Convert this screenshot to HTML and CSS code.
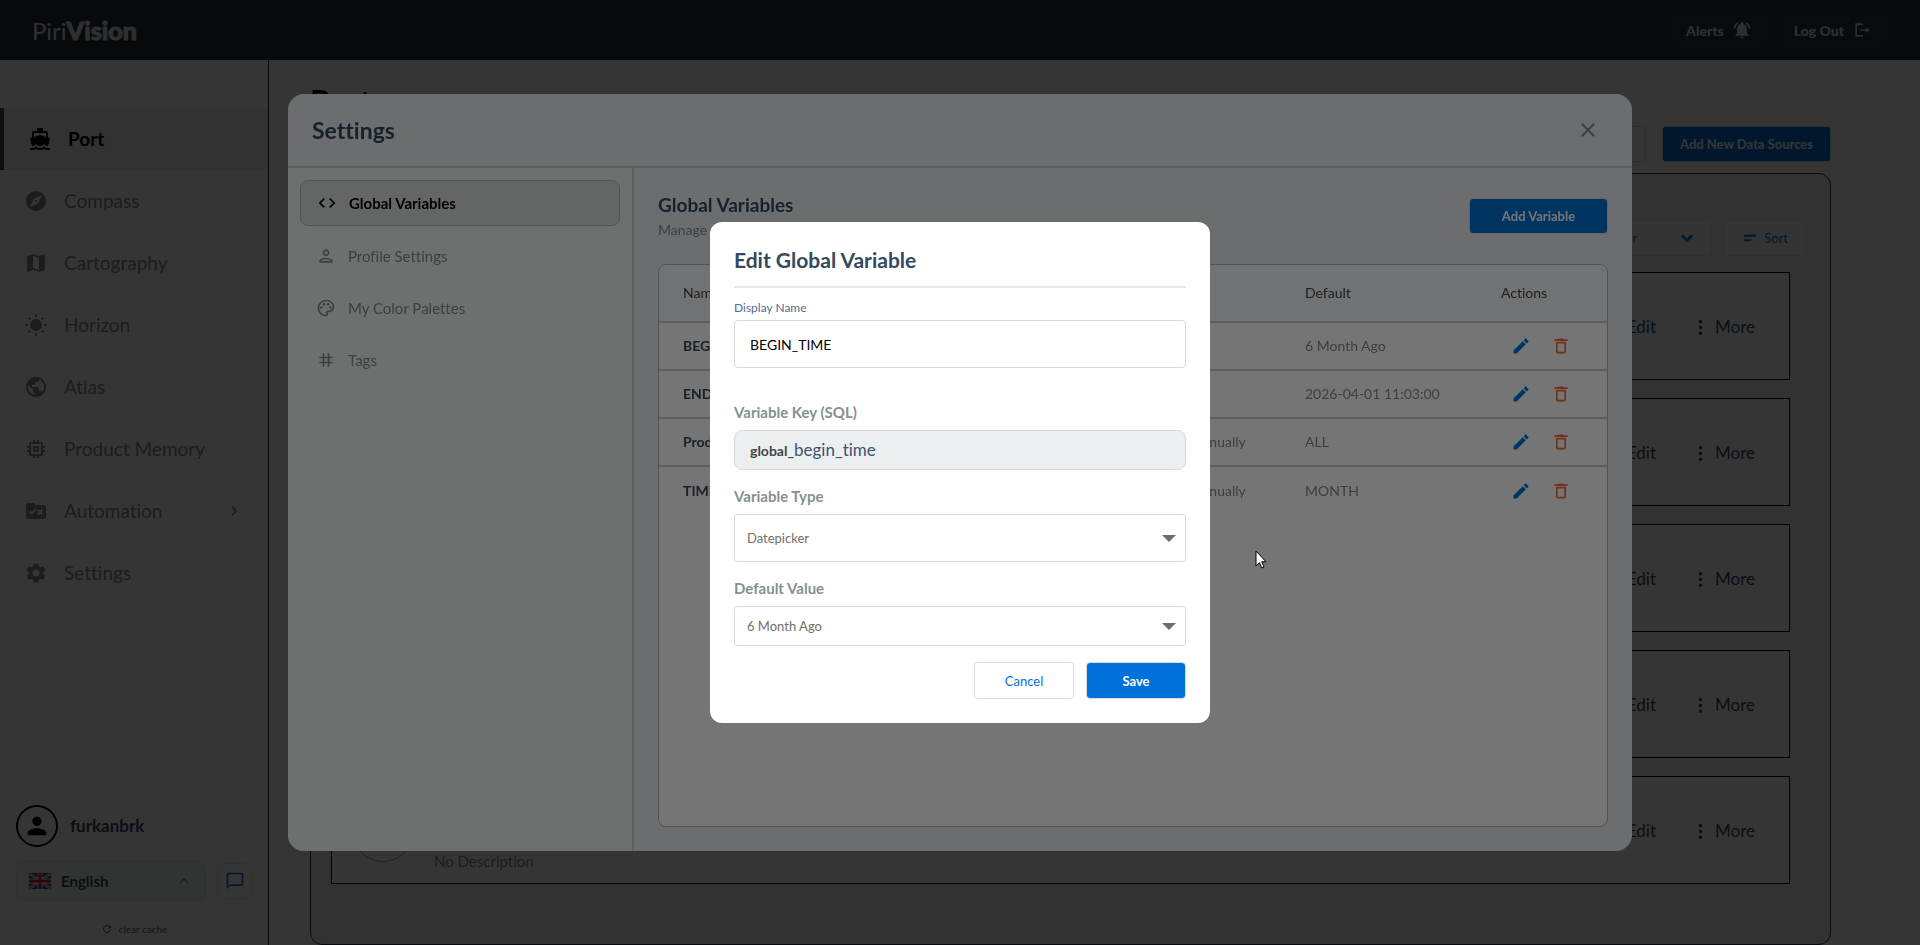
FILE: index.html
```html
<!DOCTYPE html>
<html lang="en">
<head>
    <meta charset="UTF-8">
    <meta name="viewport" content="width=device-width, initial-scale=1.0">
    <title>PiriVision</title>
    <link rel="stylesheet" href="styles.css">
</head>
<body>
    <!-- icon set -->
    <svg class="sprite" aria-hidden="true">
        <symbol id="i-boat" viewBox="0 0 24 24"><path d="M20 21c-1.39 0-2.78-.47-4-1.32-2.44 1.71-5.56 1.71-8 0C6.78 20.53 5.39 21 4 21H2v2h2c1.38 0 2.74-.35 4-.99 2.52 1.29 5.48 1.29 8 0 1.26.65 2.62.99 4 .99h2v-2h-2zM3.95 19H4c1.6 0 3.02-.88 4-2 .98 1.12 2.4 2 4 2s3.02-.88 4-2c.98 1.12 2.4 2 4 2h.05l1.89-6.68c.08-.26.06-.54-.06-.78s-.34-.42-.6-.5L20 10.62V6c0-1.1-.9-2-2-2h-3V1H9v3H6c-1.1 0-2 .9-2 2v4.62l-1.29.42c-.26.08-.48.26-.6.5s-.15.52-.06.78L3.95 19zM6 6h12v3.97L12 8 6 9.97V6z"/></symbol>
        <symbol id="i-compass" viewBox="0 0 24 24"><path d="M12 10.9c-.61 0-1.1.49-1.1 1.1s.49 1.1 1.1 1.1c.61 0 1.1-.49 1.1-1.1s-.49-1.1-1.1-1.1zM12 2C6.48 2 2 6.48 2 12s4.48 10 10 10 10-4.48 10-10S17.52 2 12 2zm2.19 12.19L6 18l3.81-8.19L18 6l-3.81 8.19z"/></symbol>
        <symbol id="i-map" viewBox="0 0 24 24"><path d="M20.5 3l-.16.03L15 5.1 9 3 3.36 4.9c-.21.07-.36.25-.36.48V20.5c0 .28.22.5.5.5l.16-.03L9 18.9l6 2.1 5.64-1.9c.21-.07.36-.25.36-.48V3.5c0-.28-.22-.5-.5-.5zM15 19l-6-2.11V5l6 2.11V19z"/></symbol>
        <symbol id="i-sun" viewBox="0 0 24 24"><circle cx="12" cy="12" r="6"/><path d="M11 1h2v3h-2zM11 20h2v3h-2zM1 11h3v2H1zM20 11h3v2h-3zM3.9 5.3l1.4-1.4 1.8 1.8-1.4 1.4zM16.9 18.3l1.4-1.4 1.8 1.8-1.4 1.4zM16.9 5.7l1.8-1.8 1.4 1.4-1.8 1.8zM3.9 18.7l1.8-1.8 1.4 1.4-1.8 1.8z"/></symbol>
        <symbol id="i-globe" viewBox="0 0 24 24"><path d="M12 2C6.48 2 2 6.48 2 12s4.48 10 10 10 10-4.48 10-10S17.52 2 12 2zm-1 17.93c-3.95-.49-7-3.85-7-7.93 0-.62.08-1.21.21-1.79L9 15v1c0 1.1.9 2 2 2v1.93zm6.9-2.54c-.26-.81-1-1.39-1.9-1.39h-1v-3c0-.55-.45-1-1-1H8v-2h2c.55 0 1-.45 1-1V7h2c1.1 0 2-.9 2-2v-.41c2.93 1.19 5 4.06 5 7.41 0 2.08-.8 3.97-2.1 5.39z"/></symbol>
        <symbol id="i-memory" viewBox="0 0 24 24"><path d="M15 9H9v6h6V9zm-2 4h-2v-2h2v2zm8-2V9h-2V7c0-1.1-.9-2-2-2h-2V3h-2v2h-2V3H9v2H7c-1.1 0-2 .9-2 2v2H3v2h2v2H3v2h2v2c0 1.1.9 2 2 2h2v2h2v-2h2v2h2v-2h2c1.1 0 2-.9 2-2v-2h2v-2h-2v-2h2zm-4 6H7V7h10v10z"/></symbol>
        <symbol id="i-rules" viewBox="0 0 24 24"><path d="M20 6h-8l-2-2H4c-1.1 0-2 .9-2 2v12c0 1.1.9 2 2 2h16c1.1 0 2-.9 2-2V8c0-1.1-.9-2-2-2zM7.83 16L5 13.17l1.41-1.41 1.41 1.41 3.54-3.54 1.41 1.41L7.83 16zm9.58-3L19 14.59 17.59 16 16 14.41 14.41 16 13 14.59 14.59 13 13 11.41 14.41 10 16 11.59 17.59 10 19 11.41 17.41 13z"/></symbol>
        <symbol id="i-gear" viewBox="0 0 24 24"><path d="M19.14 12.94c.04-.3.06-.61.06-.94 0-.32-.02-.64-.07-.94l2.03-1.58c.18-.14.23-.41.12-.61l-1.92-3.32c-.12-.22-.37-.29-.59-.22l-2.39.96c-.5-.38-1.03-.7-1.62-.94l-.36-2.54c-.04-.24-.24-.41-.48-.41h-3.84c-.24 0-.43.17-.47.41l-.36 2.54c-.59.24-1.13.57-1.62.94l-2.39-.96c-.22-.08-.47 0-.59.22L2.74 8.87c-.12.21-.08.47.12.61l2.03 1.58c-.05.3-.09.63-.09.94s.02.64.07.94l-2.03 1.58c-.18.14-.23.41-.12.61l1.92 3.32c.12.22.37.29.59.22l2.39-.96c.5.38 1.03.7 1.62.94l.36 2.54c.05.24.24.41.48.41h3.84c.24 0 .44-.17.47-.41l.36-2.54c.59-.24 1.13-.56 1.62-.94l2.39.96c.22.08.47 0 .59-.22l1.92-3.32c.12-.22.07-.47-.12-.61l-2.01-1.58zM12 15.6c-1.98 0-3.6-1.62-3.6-3.6s1.62-3.6 3.6-3.6 3.6 1.62 3.6 3.6-1.62 3.6-3.6 3.6z"/></symbol>
        <symbol id="i-right" viewBox="0 0 24 24"><path d="M8.59 16.59L13.17 12 8.59 7.41 10 6l6 6-6 6z"/></symbol>
        <symbol id="i-up" viewBox="0 0 24 24"><path d="M7.41 15.41L12 10.83l4.59 4.58L18 14l-6-6-6 6z"/></symbol>
        <symbol id="i-down" viewBox="0 0 24 24"><path d="M6 9l6 6 6-6" fill="none" stroke="currentColor" stroke-width="3"/></symbol>
        <symbol id="i-person" viewBox="0 0 24 24"><path d="M12 12c2.21 0 4-1.79 4-4s-1.79-4-4-4-4 1.79-4 4 1.79 4 4 4zm0 2c-2.67 0-8 1.34-8 4v2h16v-2c0-2.66-5.33-4-8-4z"/></symbol>
        <symbol id="i-person-line" viewBox="0 0 24 24"><path d="M12 6c1.1 0 2 .9 2 2s-.9 2-2 2-2-.9-2-2 .9-2 2-2m0 10c2.7 0 5.8 1.29 6 2H6c.23-.72 3.31-2 6-2m0-12C9.79 4 8 5.79 8 8s1.79 4 4 4 4-1.79 4-4-1.79-4-4-4zm0 10c-2.67 0-8 1.34-8 4v2h16v-2c0-2.66-5.33-4-8-4z"/></symbol>
        <symbol id="i-chat" viewBox="0 0 24 24"><path d="M20 2H4c-1.1 0-2 .9-2 2v18l4-4h14c1.1 0 2-.9 2-2V4c0-1.1-.9-2-2-2zm0 14H6l-2 2V4h16v12z"/></symbol>
        <symbol id="i-refresh" viewBox="0 0 24 24"><path d="M17.65 6.35C16.2 4.9 14.21 4 12 4c-4.42 0-7.99 3.58-7.99 8s3.57 8 7.99 8c3.73 0 6.84-2.55 7.73-6h-2.08c-.82 2.33-3.04 4-5.65 4-3.31 0-6-2.69-6-6s2.69-6 6-6c1.66 0 3.14.69 4.22 1.78L13 11h7V4l-2.35 2.35z"/></symbol>
        <symbol id="i-bell" viewBox="0 0 24 24"><path d="M7.58 4.08L6.15 2.65C3.75 4.48 2.17 7.3 2.03 10.5h2c.15-2.65 1.51-4.97 3.55-6.42zm12.39 6.42h2c-.15-3.2-1.73-6.02-4.12-7.85l-1.42 1.43c2.02 1.45 3.39 3.77 3.54 6.42zM18 11c0-3.07-1.64-5.64-4.5-6.32V4c0-.83-.67-1.5-1.5-1.5s-1.5.67-1.5 1.5v.68C7.63 5.36 6 7.92 6 11v5l-2 2v1h16v-1l-2-2v-5zm-6 11c.14 0 .27-.01.4-.04.65-.14 1.18-.58 1.44-1.18.1-.24.15-.5.15-.78h-4c.01 1.1.9 2 2.01 2z"/></symbol>
        <symbol id="i-logout" viewBox="0 0 24 24"><path d="M4 4h9v2H6v12h7v2H4zM17 8.5l4.2 3.5-4.2 3.5V13h-7v-2h7z"/></symbol>
        <symbol id="i-code" viewBox="0 0 24 24"><path d="M9.4 16.6L4.8 12l4.6-4.6L8 6l-6 6 6 6 1.4-1.4zm5.2 0l4.6-4.6-4.6-4.6L16 6l6 6-6 6-1.4-1.4z"/></symbol>
        <symbol id="i-palette" viewBox="0 0 24 24"><path d="M12 22C6.49 22 2 17.51 2 12S6.49 2 12 2s10 4.04 10 9c0 3.31-2.69 6-6 6h-1.77c-.28 0-.5.22-.5.5 0 .12.05.23.13.33.41.47.64 1.06.64 1.67 0 1.38-1.12 2.5-2.5 2.5zm0-18c-4.41 0-8 3.59-8 8s3.59 8 8 8c.28 0 .5-.22.5-.5 0-.16-.08-.28-.14-.35-.41-.46-.63-1.05-.63-1.65 0-1.38 1.12-2.5 2.5-2.5H16c2.21 0 4-1.79 4-4 0-3.86-3.59-7-8-7z"/><circle cx="6.5" cy="11.5" r="1.5"/><circle cx="9.5" cy="7.5" r="1.5"/><circle cx="14.5" cy="7.5" r="1.5"/><circle cx="17.5" cy="11.5" r="1.5"/></symbol>
        <symbol id="i-tag" viewBox="0 0 24 24"><path d="M20 10V8h-4V4h-2v4h-4V4H8v4H4v2h4v4H4v2h4v4h2v-4h4v4h2v-4h4v-2h-4v-4h4zm-6 4h-4v-4h4v4z"/></symbol>
        <symbol id="i-close" viewBox="0 0 24 24"><path d="M19 6.41L17.59 5 12 10.59 6.41 5 5 6.41 10.59 12 5 17.59 6.41 19 12 13.41 17.59 19 19 17.59 13.41 12z"/></symbol>
        <symbol id="i-pen" viewBox="0 0 24 24"><path d="M3 17.25V21h3.75L17.81 9.94l-3.75-3.75L3 17.25zM20.71 7.04c.39-.39.39-1.02 0-1.41l-2.34-2.34c-.39-.39-1.02-.39-1.41 0l-1.83 1.83 3.75 3.75 1.83-1.83z"/></symbol>
        <symbol id="i-trash" viewBox="0 0 24 24"><path d="M6 19c0 1.1.9 2 2 2h8c1.1 0 2-.9 2-2V7H6v12zM8 9h8v10H8V9zm7.5-5l-1-1h-5l-1 1H4v2h16V4z"/></symbol>
        <symbol id="i-sort" viewBox="0 0 24 24"><path d="M3 7h18v3H3zM3 14h11v3H3z"/></symbol>
        <symbol id="i-dots" viewBox="0 0 24 24"><circle cx="12" cy="4" r="2.5"/><circle cx="12" cy="12" r="2.5"/><circle cx="12" cy="20" r="2.5"/></symbol>
    </svg>

    <div class="app">
        <header class="topbar">
            <div class="logo">Piri<strong>Vision</strong></div>
            <div class="topbar-actions">
                <button type="button" class="top-btn">Alerts <svg class="icon"><use href="#i-bell"/></svg></button>
                <button type="button" class="top-btn">Log Out <svg class="icon"><use href="#i-logout"/></svg></button>
            </div>
        </header>

        <div class="body">
            <aside class="sidebar">
                <nav class="menu">
                    <a href="#" class="menu-item active"><svg class="icon"><use href="#i-boat"/></svg>Port</a>
                    <a href="#" class="menu-item"><svg class="icon"><use href="#i-compass"/></svg>Compass</a>
                    <a href="#" class="menu-item"><svg class="icon"><use href="#i-map"/></svg>Cartography</a>
                    <a href="#" class="menu-item"><svg class="icon"><use href="#i-sun"/></svg>Horizon</a>
                    <a href="#" class="menu-item"><svg class="icon"><use href="#i-globe"/></svg>Atlas</a>
                    <a href="#" class="menu-item"><svg class="icon"><use href="#i-memory"/></svg>Product Memory</a>
                    <a href="#" class="menu-item"><svg class="icon"><use href="#i-rules"/></svg>Automation<svg class="icon arrow"><use href="#i-right"/></svg></a>
                    <a href="#" class="menu-item"><svg class="icon"><use href="#i-gear"/></svg>Settings</a>
                </nav>
                <div class="sidebar-footer">
                    <div class="user">
                        <span class="avatar"><svg class="icon"><use href="#i-person"/></svg></span>
                        furkanbrk
                    </div>
                    <div class="lang-row">
                        <button type="button" class="lang-btn">
                            <svg class="flag" viewBox="0 0 22 16">
                                <rect width="22" height="16" fill="#1b3f94"/>
                                <path d="M0 0l22 16M22 0L0 16" stroke="#fff" stroke-width="3"/>
                                <path d="M0 0l22 16M22 0L0 16" stroke="#d0203a" stroke-width="1"/>
                                <path d="M11 0v16M0 8h22" stroke="#fff" stroke-width="5"/>
                                <path d="M11 0v16M0 8h22" stroke="#d0203a" stroke-width="3"/>
                            </svg>
                            English
                            <svg class="icon caret"><use href="#i-up"/></svg>
                        </button>
                        <button type="button" class="chat-btn" aria-label="Feedback"><svg class="icon"><use href="#i-chat"/></svg></button>
                    </div>
                    <button type="button" class="cache-btn"><svg class="icon"><use href="#i-refresh"/></svg>clear cache</button>
                </div>
            </aside>

            <main class="main">
                <h1>Port</h1>
                <div class="toolbar">
                    <input type="text" class="search" aria-label="Search">
                    <button type="button" class="btn btn-primary add-source">Add New Data Sources</button>
                </div>
                <section class="panel">
                    <div class="filters">
                        <button type="button" class="filter-btn">Filter<svg class="icon"><use href="#i-down"/></svg></button>
                        <button type="button" class="sort-btn"><svg class="icon"><use href="#i-sort"/></svg>Sort</button>
                    </div>
                    <div class="cards" id="cards"></div>
                </section>
            </main>
        </div>
    </div>

    <div class="overlay">
        <div class="settings" role="dialog" aria-labelledby="settingsTitle">
            <div class="settings-header">
                <h2 id="settingsTitle">Settings</h2>
                <button type="button" class="close-btn" aria-label="Close"><svg class="icon"><use href="#i-close"/></svg></button>
            </div>
            <div class="settings-body">
                <nav class="settings-nav">
                    <a href="#" class="nav-item selected"><svg class="icon"><use href="#i-code"/></svg>Global Variables</a>
                    <a href="#" class="nav-item"><svg class="icon"><use href="#i-person-line"/></svg>Profile Settings</a>
                    <a href="#" class="nav-item"><svg class="icon"><use href="#i-palette"/></svg>My Color Palettes</a>
                    <a href="#" class="nav-item"><svg class="icon"><use href="#i-tag"/></svg>Tags</a>
                </nav>
                <section class="settings-main">
                    <div class="section-head">
                        <div>
                            <h3>Global Variables</h3>
                            <p>Manage all variables</p>
                        </div>
                        <button type="button" class="btn btn-primary add-variable">Add Variable</button>
                    </div>
                    <div class="table-box">
                        <table>
                            <thead>
                                <tr>
                                    <th>Name</th>
                                    <th class="col-type">Type</th>
                                    <th class="col-default">Default</th>
                                    <th class="col-actions">Actions</th>
                                </tr>
                            </thead>
                            <tbody id="variables"></tbody>
                        </table>
                    </div>
                </section>
            </div>
        </div>
    </div>

    <div class="overlay">
        <form class="edit" role="dialog" aria-labelledby="editTitle">
            <h2 id="editTitle">Edit Global Variable</h2>
            <label class="small-label" for="displayName">Display Name</label>
            <input type="text" class="field tall" id="displayName" value="BEGIN_TIME">
            <div class="key-label">Variable Key (SQL)</div>
            <div class="key-box"><b>global_</b>begin_time</div>
            <label for="varType">Variable Type</label>
            <select class="field tall" id="varType">
                <option>Datepicker</option>
            </select>
            <label for="defaultValue">Default Value</label>
            <select class="field" id="defaultValue">
                <option>6 Month Ago</option>
            </select>
            <div class="edit-actions">
                <button type="button" class="btn btn-outline">Cancel</button>
                <button type="button" class="btn btn-primary">Save</button>
            </div>
        </form>
    </div>

    <svg class="cursor" viewBox="0 0 12 19"><path d="M1 1v15l3.5-3.3 2.3 5.3 2.2-1-2.3-5.2H11z" fill="#fff" stroke="#000"/></svg>

    <script>
        const variables = [
            { name: 'BEGIN_TIME', type: '', value: '6 Month Ago' },
            { name: 'END_TIME', type: '', value: '2026-04-01 11:03:00' },
            { name: 'Product', type: 'Add Manually', value: 'ALL' },
            { name: 'TIME', type: 'Add Manually', value: 'MONTH' }
        ];

        document.getElementById('variables').innerHTML = variables.map(v => `
            <tr>
                <td class="var-name">${v.name}</td>
                <td>${v.type}</td>
                <td>${v.value}</td>
                <td class="actions">
                    <button type="button" class="edit-btn" aria-label="Edit"><svg class="icon"><use href="#i-pen"/></svg></button>
                    <button type="button" class="delete-btn" aria-label="Delete"><svg class="icon"><use href="#i-trash"/></svg></button>
                </td>
            </tr>
        `).join('');

        // data source cards
        let cards = '';
        for (let i = 0; i < 5; i++) {
            cards += `
                <article class="card">
                    <span class="card-logo"></span>
                    <p class="card-desc">No Description</p>
                    <a href="#" class="card-link">Edit</a>
                    <a href="#" class="card-link"><svg class="icon"><use href="#i-dots"/></svg>More</a>
                </article>
            `;
        }
        document.getElementById('cards').innerHTML = cards;
    </script>
</body>
</html>
```
FILE: styles.css
```css
* {
    margin: 0;
    padding: 0;
    box-sizing: border-box;
}

body {
    font-family: Lato, "Liberation Sans", sans-serif;
    font-size: 14px;
    line-height: 20px;
    font-variant-ligatures: none;
    background-color: #fff;
    color: #34495e;
    overflow: hidden;
}

a {
    color: inherit;
    text-decoration: none;
}

button,
input,
select {
    font-family: inherit;
    font-size: 14px;
}

button {
    cursor: pointer;
    border: none;
    background: none;
    color: inherit;
}

.sprite {
    display: none;
}

.icon {
    width: 20px;
    height: 20px;
    fill: currentColor;
    flex-shrink: 0;
}

.app {
    display: flex;
    flex-direction: column;
    height: 100vh;
}

/* top bar */
.topbar {
    display: flex;
    justify-content: space-between;
    align-items: center;
    height: 60px;
    padding: 0 32px;
    background-color: #213042;
    color: #e0e0e0;
}

.logo {
    font-size: 24px;
    line-height: 32px;
}

.logo strong {
    font-size: 25px;
    font-weight: 900;
    -webkit-text-stroke: 1px currentColor;
}

.topbar-actions {
    display: flex;
    gap: 10px;
}

.top-btn {
    display: flex;
    align-items: center;
    gap: 8px;
    height: 36px;
    padding: 0 16px;
    border-radius: 8px;
    background-color: rgba(255, 255, 255, 0.03);
    font-weight: 900;
}

/* sidebar */
.body {
    display: flex;
    flex: 1;
    min-height: 0;
}

.sidebar {
    display: flex;
    flex-direction: column;
    justify-content: space-between;
    width: 269px;
    border-right: 1px solid #213042;
    padding: 48px 0 0;
}

.menu-item {
    display: flex;
    align-items: center;
    gap: 16px;
    height: 62px;
    padding: 0 24px;
    font-size: 19px;
    color: #84898b;
}

.menu-item .icon {
    width: 24px;
    height: 24px;
}

.menu-item.active {
    border-left: 4px solid #444;
    background-color: #ededed;
    color: #000;
    font-weight: 700;
}

.menu-item .arrow {
    width: 20px;
    margin-left: auto;
}

.sidebar-footer {
    margin: 0 16px;
    padding: 23px 0 6px;
    border-top: 1px solid #f3f3f3;
}

.user {
    display: flex;
    align-items: center;
    gap: 12px;
    font-size: 17px;
    font-weight: 700;
}

.avatar {
    display: flex;
    align-items: center;
    justify-content: center;
    width: 42px;
    height: 42px;
    border: 2px solid #000;
    border-radius: 50%;
    color: #000;
}

.avatar .icon {
    width: 28px;
    height: 28px;
}

.lang-row {
    display: flex;
    align-items: center;
    gap: 11px;
    margin: 14px 0 18px;
}

.lang-btn {
    display: flex;
    align-items: center;
    flex: 1;
    gap: 10px;
    height: 40px;
    padding: 0 12px;
    border: 1px solid #e3e8e8;
    border-radius: 8px;
    background-color: #f0f4f4;
    font-size: 15px;
    font-weight: 700;
}

.flag {
    width: 22px;
    height: 16px;
}

.caret {
    width: 18px;
    margin-left: auto;
    color: #84898b;
}

.chat-btn {
    display: flex;
    align-items: center;
    justify-content: center;
    width: 35px;
    height: 36px;
    border: 1px solid #e3e8e8;
    border-radius: 8px;
    color: #0071d8;
}

.cache-btn {
    display: flex;
    align-items: center;
    justify-content: center;
    gap: 6px;
    width: 100%;
    font-size: 10px;
    line-height: 20px;
    color: #666;
}

.cache-btn .icon {
    width: 12px;
    height: 12px;
}

/* port page */
.main {
    flex: 1;
    padding: 22px 89px 0 41px;
}

h1 {
    font-size: 32px;
    line-height: 40px;
    color: #000;
}

.toolbar {
    display: flex;
    justify-content: flex-end;
    gap: 16px;
    margin: 4px 0 11px;
}

.search {
    width: 360px;
    height: 36px;
    border: 1px solid #d8dcdc;
    border-radius: 4px;
}

.btn {
    height: 36px;
    border: 1px solid #d8dcdc;
    border-radius: 4px;
    font-size: 13px;
    font-weight: 700;
}

.btn-primary {
    background-color: #0071d8;
    color: #fff;
}

.btn-outline {
    background-color: #fff;
    color: #0071d8;
    font-weight: 400;
}

.add-source {
    padding: 0 17px;
}

.panel {
    height: 772px;
    padding: 46px 24px 0 20px;
    border: 1px solid #213042;
    border-radius: 12px;
    background-color: #ededed;
}

.filters {
    display: flex;
    justify-content: flex-end;
    gap: 12px;
    margin-bottom: 16px;
}

.filter-btn,
.sort-btn {
    display: flex;
    align-items: center;
    height: 36px;
    border: 1px solid #e3e8e8;
    border-radius: 4px;
    background-color: #f6f6f6;
    font-size: 13px;
    color: #0071d8;
}

.filter-btn {
    gap: 40px;
    padding: 0 14px;
}

.sort-btn {
    gap: 6px;
    padding: 0 17px;
}

.sort-btn .icon {
    width: 16px;
}

.cards {
    display: grid;
    gap: 18px;
    margin-right: 16px;
}

.card {
    display: flex;
    align-items: center;
    gap: 20px;
    height: 108px;
    padding: 2px 34px 0 20px;
    border: 1px solid #000;
    background-color: #fff;
    font-size: 17px;
}

.card-logo {
    width: 62px;
    height: 62px;
    border: 1px solid #999;
    border-radius: 50%;
}

.card-desc {
    flex: 1;
    padding-top: 60px;
    font-size: 15px;
    color: #84898b;
}

.card-link {
    display: flex;
    align-items: center;
    gap: 6px;
    margin-left: 16px;
}

.card-link .icon {
    width: 17px;
    height: 17px;
}

/* dialogs */
.overlay {
    position: fixed;
    inset: 0;
    display: flex;
    align-items: center;
    justify-content: center;
    background-color: rgba(0, 0, 0, 0.54);
}

.settings {
    display: flex;
    flex-direction: column;
    width: 70vw;
    height: calc(80vh + 1px);
    border-radius: 16px;
    background-color: #ecedf1;
    overflow: hidden;
}

.settings-header {
    display: flex;
    align-items: center;
    justify-content: space-between;
    height: 74px;
    padding: 0 32px 0 24px;
    border-bottom: 2px solid #c8cfcf;
}

.settings-header h2 {
    font-size: 23px;
    line-height: 32px;
}

.close-btn .icon {
    display: block;
    width: 24px;
    height: 24px;
    color: #84898b;
}

.settings-body {
    display: flex;
    flex: 1;
    min-height: 0;
}

.settings-nav {
    display: flex;
    flex-direction: column;
    gap: 8px;
    width: 346px;
    padding: 12px;
    border-right: 2px solid #c8cfcf;
    background-color: #f0f4f3;
}

.nav-item {
    display: flex;
    align-items: center;
    gap: 12px;
    height: 44px;
    padding: 0 16px;
    border-radius: 8px;
    font-size: 15px;
    color: #84898b;
}

.nav-item.selected {
    height: 46px;
    border: 1px solid #afb6b6;
    background-color: #dbdfdd;
    color: #000;
    font-weight: 700;
}

.settings-main {
    display: flex;
    flex-direction: column;
    flex: 1;
    padding: 24px;
}

.section-head {
    display: flex;
    align-items: center;
    justify-content: space-between;
    margin-bottom: 24px;
}

h3 {
    font-size: 19px;
    line-height: 26px;
}

.section-head p {
    padding-top: 2px;
    color: #84898b;
}

.add-variable {
    width: 139px;
}

.table-box {
    flex: 1;
    border: 1px solid #afb6b6;
    border-radius: 8px;
    background-color: #fff;
    overflow: hidden;
}

table {
    width: 100%;
    border-collapse: collapse;
    table-layout: fixed;
}

th {
    height: 57px;
    padding: 0 24px;
    border-bottom: 2px solid #c8cfcf;
    background-color: #f7f8fa;
    text-align: left;
    font-weight: 400;
    color: #444;
}

td {
    height: 48px;
    padding: 0 24px;
    color: #84898b;
}

tbody tr:not(:last-child) td {
    border-bottom: 2px solid #c8cfcf;
}

.col-type {
    width: 144px;
}

.col-default {
    width: 196px;
}

.col-actions {
    width: 130px;
}

.var-name {
    font-weight: 700;
    color: #34495e;
}

.actions {
    padding: 0 0 0 26px;
}

.actions button {
    margin: 0 6px;
    padding: 2px;
    vertical-align: middle;
}

.actions .icon {
    display: block;
}

.edit-btn {
    color: #0071d8;
}

.delete-btn {
    color: #f26b3a;
}

/* edit form */
.edit {
    display: flex;
    flex-direction: column;
    width: 500px;
    padding: 24px;
    border-radius: 12px;
    background-color: #fff;
}

.edit h2 {
    padding-bottom: 12px;
    border-bottom: 2px solid #e3e9e9;
    font-size: 21px;
    line-height: 28px;
}

.edit label,
.key-label {
    margin-top: 16px;
    margin-bottom: 8px;
    font-size: 15px;
    font-weight: 700;
    color: #85918f;
}

.edit .small-label {
    margin: 12px 0 4px;
    font-size: 12px;
    line-height: 16px;
    font-weight: 400;
    color: #566b91;
}

.edit .key-label {
    margin-top: 34px;
}

.field {
    width: 100%;
    height: 40px;
    padding: 0 15px;
    border: 1px solid #d8dada;
    border-radius: 4px;
    background-color: #fff;
    color: #000;
}

.field.tall {
    height: 48px;
}

select.field {
    appearance: none;
    padding: 0 12px;
    background-image: url("data:image/svg+xml,%3Csvg xmlns='http://www.w3.org/2000/svg' width='14' height='7'%3E%3Cpath d='M0 0h14L7 7z' fill='%23706e6b'/%3E%3C/svg%3E");
    background-repeat: no-repeat;
    background-position: right 9px center;
    font-size: 13px;
    color: #706e6b;
}

.key-box {
    height: 40px;
    padding: 0 15px;
    border: 1px solid #d8dada;
    border-radius: 8px;
    background-color: #ebeff0;
    font-size: 17px;
    line-height: 38px;
    color: #3f5270;
}

.key-box b {
    font-size: 14px;
    color: #444;
}

.edit-actions {
    display: flex;
    justify-content: flex-end;
    gap: 12px;
    margin-top: 16px;
}

.edit-actions .btn {
    width: 100px;
    height: 37px;
}

.cursor {
    position: absolute;
    left: 1255px;
    top: 550px;
    width: 12px;
    height: 19px;
}
```
